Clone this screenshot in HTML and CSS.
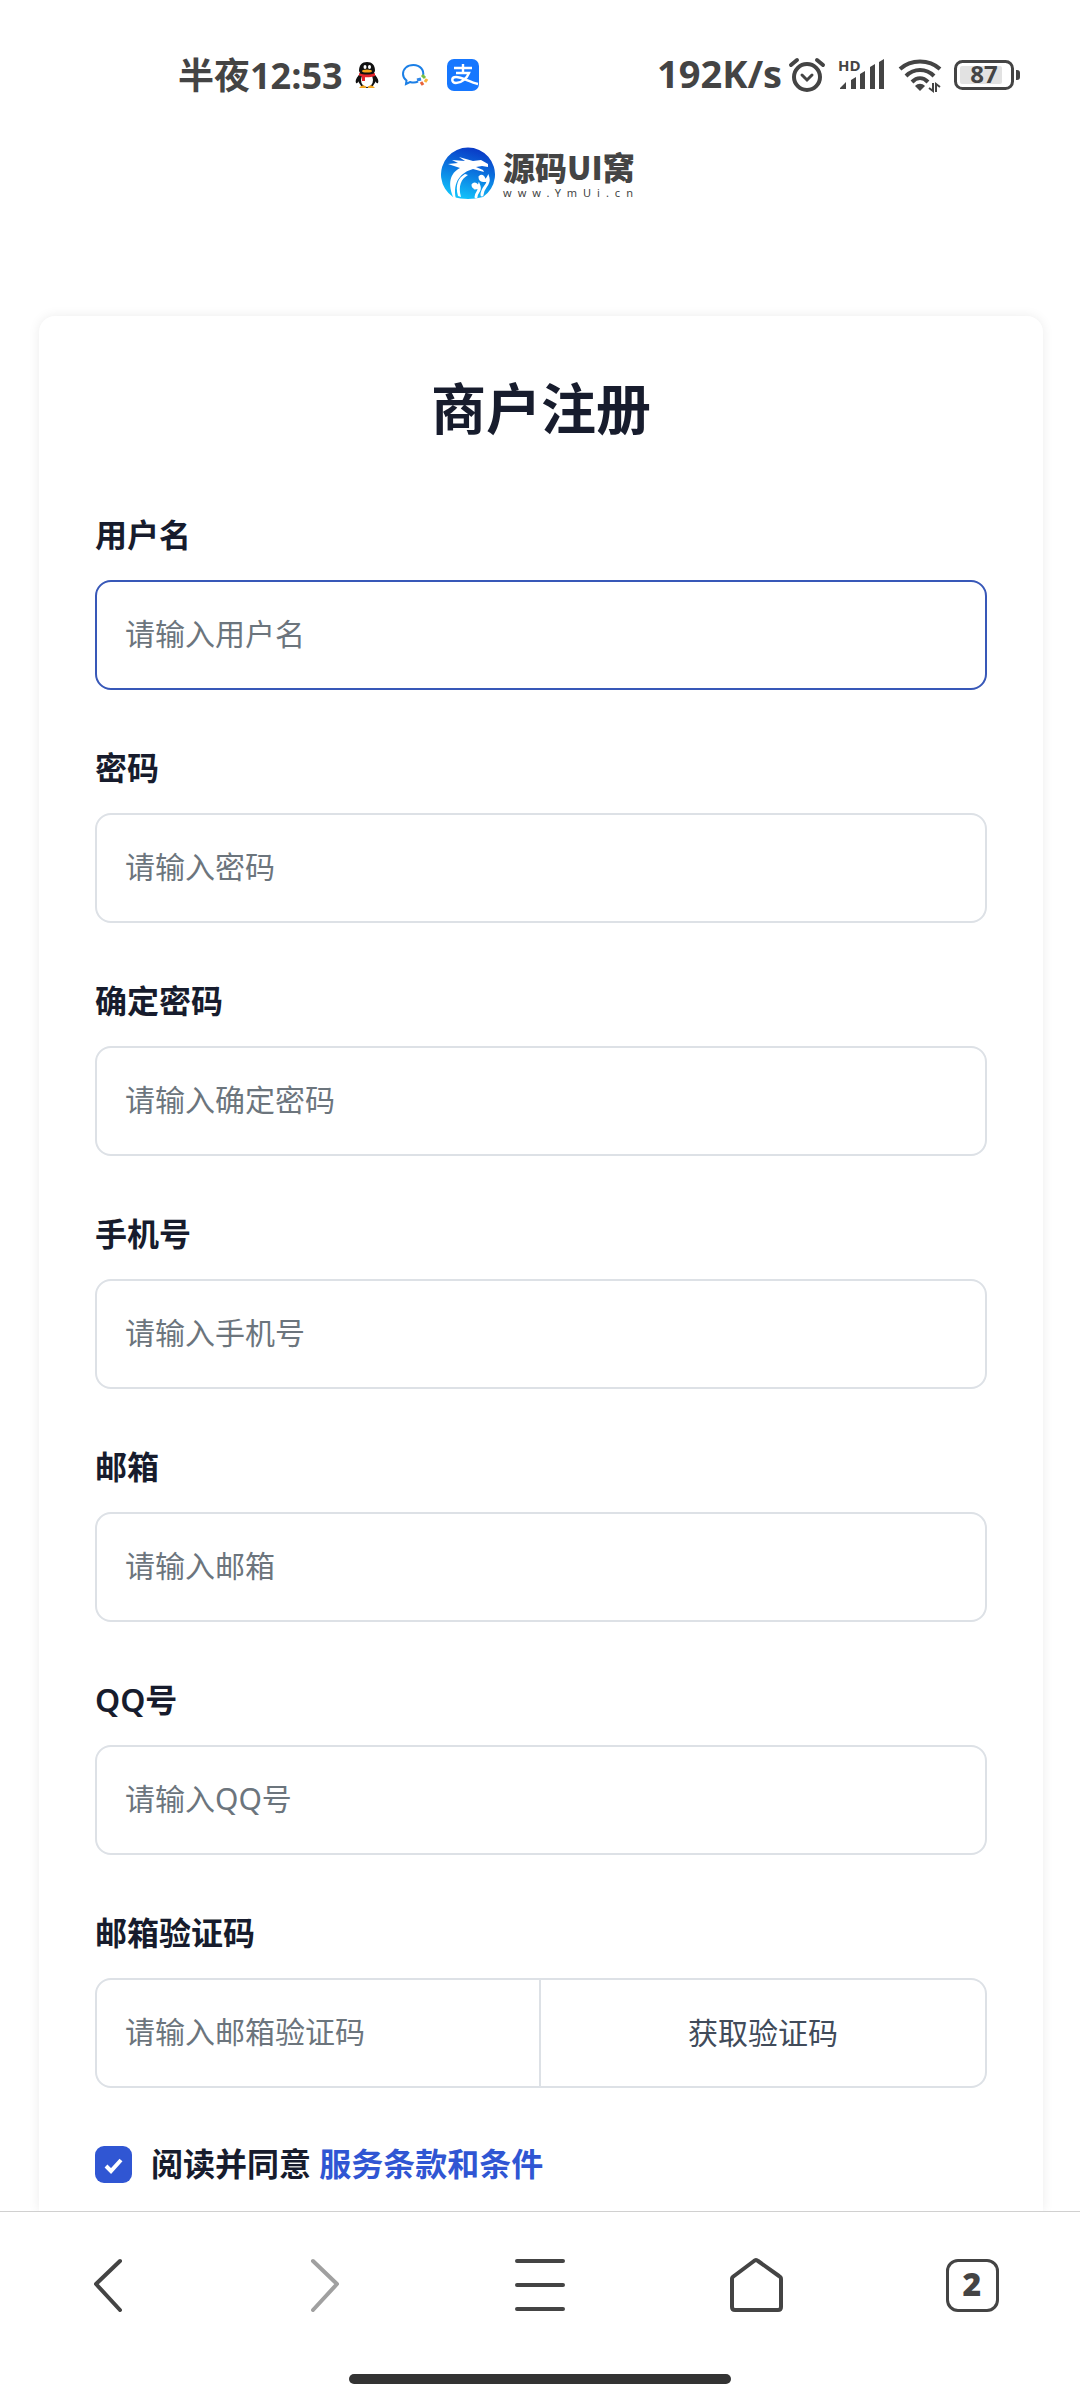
FILE: index.html
```html
<!DOCTYPE html>
<html lang="zh-CN">
<head>
<meta charset="utf-8">
<meta name="viewport" content="width=device-width, initial-scale=1">
<title>商户注册</title>
<link rel="stylesheet" href="styles.css">
</head>
<body>
<div class="status">
  <div class="status-group">
    <span class="status-time">半夜12:53</span>
    <span class="status-apps">
      <svg width="32" height="32" viewBox="0 0 32 32" aria-hidden="true">
        <path d="M8 16c-3 3-4 6-3 8 1 1 2-1 3-2zM24 16c3 3 4 6 3 8-1 1-2-1-3-2z" fill="#111"/>
        <ellipse cx="16" cy="20" rx="9" ry="9" fill="#111"/>
        <ellipse cx="16" cy="21" rx="6" ry="7" fill="#fff"/>
        <path d="M8 12c0-6 3-9 8-9s8 3 8 9l-2 4H10z" fill="#111"/>
        <ellipse cx="14" cy="8" rx="1.5" ry="2" fill="#fff"/><ellipse cx="18.500" cy="8" rx="1.500" ry="2" fill="#fff"/>
        <ellipse cx="16" cy="12" rx="5" ry="1.600" fill="#f5a51c"/>
        <path d="M8 14c5 2 11 2 16 0v3c-3 1-6 1.500-10 1.300V22h-3v-4.500L8 16.500z" fill="#e3242b"/>
        <path d="M9 28c2-2 5-2 6 0v1H8zM17 28c1-2 4-2 6 0l1 1h-7z" fill="#f5a51c"/>
      </svg>
      <svg width="32" height="32" viewBox="0 0 32 32" fill="none" aria-hidden="true">
        <path d="M24 17c1.500-6-3-11-9.500-11S4 10 4 15c0 3 1.500 5 3.500 6.500L7 25l4-2c3 .8 6 .6 8-.5" stroke="#1b7fe6" stroke-width="2"/>
        <path d="M23 16l3 3" stroke="#7bc043" stroke-width="3"/><path d="M28 20l-2 3" stroke="#f9b43a" stroke-width="3"/><path d="M24 26l-2-3" stroke="#e8623a" stroke-width="3"/><path d="M18 21l4-1" stroke="#2f86e8" stroke-width="3"/>
      </svg>
      <svg width="32" height="32" viewBox="0 0 32 32" fill="none" aria-hidden="true">
        <rect width="32" height="32" rx="7" fill="#1677ff"/>
        <path d="M7 9h18M16 5v9M9 14h13c-2 5-7 10-13 10-5 0-5-6 0-6 6 0 13 5 22 7" stroke="#fff" stroke-width="2.400"/>
      </svg>
    </span>
  </div>
  <div class="status-group status-right">
    <div class="status-group status-net">
      <span class="status-speed">192K/s</span>
      <svg width="38" height="36" viewBox="0 0 38 36" fill="none" stroke="#444" stroke-width="4" stroke-linecap="round" aria-hidden="true">
        <circle cx="19" cy="20" r="13"/><path d="M3 8l6-5M35 8l-6-5"/><path d="M14 18l5 5 5-5" stroke-width="3"/>
      </svg>
    </div>
    <svg width="48" height="48" viewBox="0 -6 48 48" fill="#444" aria-hidden="true">
      <text x="0" y="14" class="signal-hd">HD</text>
      <path d="M2 31l6-6v7H2zM13 23l5-3v12h-5zM22 17l5-3v18h-5zM32 10l5-3v25h-5zM41 5l5-3v30h-5z"/>
    </svg>
    <svg width="44" height="36" viewBox="0 0 44 36" fill="none" stroke="#444" stroke-width="4" aria-hidden="true">
      <path d="M2 12C13 2 31 2 42 12M8 19c8-8 20-8 28 0M14 25c5-5 11-5 16 0"/>
      <path d="M17 29c3-3 7-3 10 0l-5 5z" fill="#444" stroke="none"/><path d="M35 26v8l-4-3M38 35v-8l4 3" stroke-width="2"/>
    </svg>
    <svg width="66" height="36" viewBox="0 -3 66 36" aria-hidden="true">
      <rect x="1.500" y="1.500" width="57" height="27" rx="7" fill="#fff" stroke="#444" stroke-width="3"/>
      <rect x="6" y="6" width="42" height="18" rx="2" fill="#e2e2e2"/>
      <path d="M62 10h1q3 0 3 3v4q0 3-3 3h-1z" fill="#444"/>
      <text x="30" y="23" text-anchor="middle" class="battery-text">87</text>
    </svg>
  </div>
</div>

<header class="brand">
  <svg width="54" height="54" viewBox="0 0 54 54" aria-hidden="true">
    <defs><linearGradient id="sea" x1="0.700" y1="0" x2="0.400" y2="1"><stop offset="0" stop-color="#0a35c4"/><stop offset=".5" stop-color="#0b78e0"/><stop offset="1" stop-color="#12c4fb"/></linearGradient></defs>
    <path d="M12 50A27 27 0 1 1 42 50Q27 54 12 50z" fill="url(#sea)"/>
    <path d="M13 52C6 37 9 26 19 21L7 17l10-1-6-3 13 1-6-4 14 4 8-1 7 4v3l-6-1-6 1 7 3 1 2-11-3C21 25 11 34 15 52z" fill="#fff"/>
    <path d="M17 49c-3-11 0-18 7-22l3 1c-7 4-10 11-7 22z" fill="#fff"/>
    <g stroke="#fff" stroke-width="3" fill="none" stroke-linecap="round">
      <path d="M34 41a2 2 0 1 0-2-3c0 3 5 4 6 1 2 5-3 6-3 11"/>
      <path d="M42 33a2 2 0 1 0-3-3c0 4 6 5 8 1 2 7-6 9-6 17"/>
    </g>
  </svg>
  <div class="brand-text">
    <span class="brand-name">源码UI窝</span>
    <span class="brand-url">www.YmUi.cn</span>
  </div>
</header>

<main class="card">
  <h1 class="title">商户注册</h1>
  <form class="form">
    <div class="field"><label class="label" for="user">用户名</label><input class="input input-active" id="user" type="text" placeholder="请输入用户名"></div>
    <div class="field"><label class="label" for="pass">密码</label><input class="input" id="pass" type="password" placeholder="请输入密码"></div>
    <div class="field"><label class="label" for="pass2">确定密码</label><input class="input" id="pass2" type="password" placeholder="请输入确定密码"></div>
    <div class="field"><label class="label" for="phone">手机号</label><input class="input" id="phone" type="tel" placeholder="请输入手机号"></div>
    <div class="field"><label class="label" for="email">邮箱</label><input class="input" id="email" type="email" placeholder="请输入邮箱"></div>
    <div class="field"><label class="label" for="qq">QQ号</label><input class="input" id="qq" type="text" placeholder="请输入QQ号"></div>
    <div class="field"><label class="label" for="code">邮箱验证码</label>
      <div class="group"><input class="input group-input" id="code" type="text" placeholder="请输入邮箱验证码"><button class="group-button" type="button">获取验证码</button></div>
    </div>
    <div class="agree"><input class="check" id="agree" type="checkbox" checked><label class="agree-label" for="agree">阅读并同意 <a class="link" href="#terms">服务条款和条件</a></label></div>
  </form>
</main>

<footer class="browser">
  <nav class="browser-nav">
    <button class="nav-button" type="button" aria-label="后退"><svg width="54" height="54" viewBox="0 0 54 54"><path d="M39 3L15 26l24 26"/></svg></button>
    <button class="nav-button nav-off" type="button" aria-label="前进"><svg width="54" height="54" viewBox="0 0 54 54"><path d="M16 3l24 23-24 26"/></svg></button>
    <button class="nav-button" type="button" aria-label="菜单"><svg width="54" height="54" viewBox="0 0 54 54"><path d="M4 3h46M4 27h46M4 51h46"/></svg></button>
    <button class="nav-button" type="button" aria-label="主页"><svg width="54" height="54" viewBox="0 0 54 54"><path d="M25 3q2-2 4 0l21 15q2 1 2 3v28q0 3-3 3H6q-3 0-3-3V21q0-2 2-3z"/></svg></button>
    <button class="nav-button" type="button" aria-label="标签页"><span class="tabs">2</span></button>
  </nav>
  <div class="home-bar"></div>
</footer>
</body>
</html>
```
FILE: styles.css
```css
* { box-sizing: border-box; }

body {
  margin: 0;
  min-height: 100vh;
  display: flex;
  flex-direction: column;
  background: #fff;
  color: #171c2d;
  font-family: "Noto Sans", "Noto Sans CJK SC", sans-serif;
  font-size: 32px;
}

svg { display: block; flex: none; }
input, button { font: inherit; color: inherit; }

.status {
  height: 120px;
  padding: 30px 60px 0 178px;
  display: flex;
  justify-content: space-between;
  align-items: center;
  color: #444;
  font-family: "Open Sans", "Noto Sans CJK SC", sans-serif;
  font-size: 36px;
  font-weight: 700;
}
.status-group { display: flex; align-items: center; gap: 8px; white-space: nowrap; }
.status-apps { display: flex; gap: 16px; }
.status-right { gap: 12px; }
.status-net { gap: 6px; }
.status-time, .status-speed { padding-bottom: 4px; }
.status-speed { font-size: 38px; }
.signal-hd { font-size: 15px; }
.battery-text { font-size: 24px; fill: #444; }

.brand {
  height: 196px;
  padding-top: 27px;
  display: flex;
  justify-content: center;
  gap: 8px;
}
.brand-text { display: flex; flex-direction: column; color: #444; }
.brand-name {
  font-family: "Noto Sans CJK SC", sans-serif;
  font-size: 32px;
  font-weight: 900;
  line-height: 38px;
}
.brand-url { font-size: 11px; line-height: 16px; letter-spacing: 6px; }

.card {
  flex: 1;
  margin: 0 37px 0 39px;
  padding: 59px 56px 16px;
  border-radius: 16px 16px 0 0;
  background: #fff;
  box-shadow: 0 0 12px rgba(0, 0, 0, 0.08);
}
.title { margin: 0 0 70px; font-size: 55px; font-weight: 600; line-height: 66px; text-align: center; }
.form { display: flex; flex-direction: column; gap: 54px; }
.field { display: flex; flex-direction: column; gap: 21px; }
.label { font-weight: 600; line-height: 48px; }
.input {
  width: 100%;
  height: 110px;
  padding: 0 28px 4px;
  border: 2px solid #dde1e6;
  border-radius: 16px;
  outline: 0;
  background: #fff;
  font-size: 30px;
}
.input::placeholder { color: #6c757d; opacity: 1; }
.input-active { border-color: #3858b8; }
.group { display: grid; grid-template-columns: 1fr 1fr; }
.group-input { border-radius: 16px 0 0 16px; }
.group-button {
  padding: 0 0 4px;
  border: 2px solid #dde1e6;
  border-left: 0;
  border-radius: 0 16px 16px 0;
  background: #fff;
  color: #414b5a;
  font-size: 30px;
}
.agree { display: flex; align-items: center; gap: 19px; }
.check {
  appearance: none;
  width: 37px;
  height: 37px;
  margin: 0;
  border-radius: 9px;
  background: #3056d3 url("data:image/svg+xml,%3Csvg xmlns='http://www.w3.org/2000/svg' viewBox='0 0 37 37'%3E%3Cpath d='M11 20l5 5 10-11' fill='none' stroke='%23fff' stroke-width='4'/%3E%3C/svg%3E");
}
.agree-label { font-weight: 600; line-height: 44px; }
.link { color: #3056d3; text-decoration: none; }

.browser {
  position: relative;
  padding-bottom: 16px;
  border-top: 1px solid #d0d0d0;
  background: #fff;
}
.browser-nav { display: grid; grid-template-columns: repeat(5, 1fr); height: 146px; }
.nav-button {
  display: flex;
  align-items: center;
  justify-content: center;
  padding: 0;
  border: 0;
  background: none;
  color: #444;
}
.nav-button svg { fill: none; stroke: currentColor; stroke-width: 4; stroke-linecap: round; stroke-linejoin: round; }
.nav-button.nav-off { color: #a0a0a0; }
.tabs {
  width: 53px;
  height: 53px;
  border: 3px solid;
  border-radius: 12px;
  font-size: 32px;
  font-weight: 900;
  line-height: 44px;
}
.home-bar { width: 382px; height: 10px; margin: 16px auto 0; border-radius: 5px; background: #333; }
```
